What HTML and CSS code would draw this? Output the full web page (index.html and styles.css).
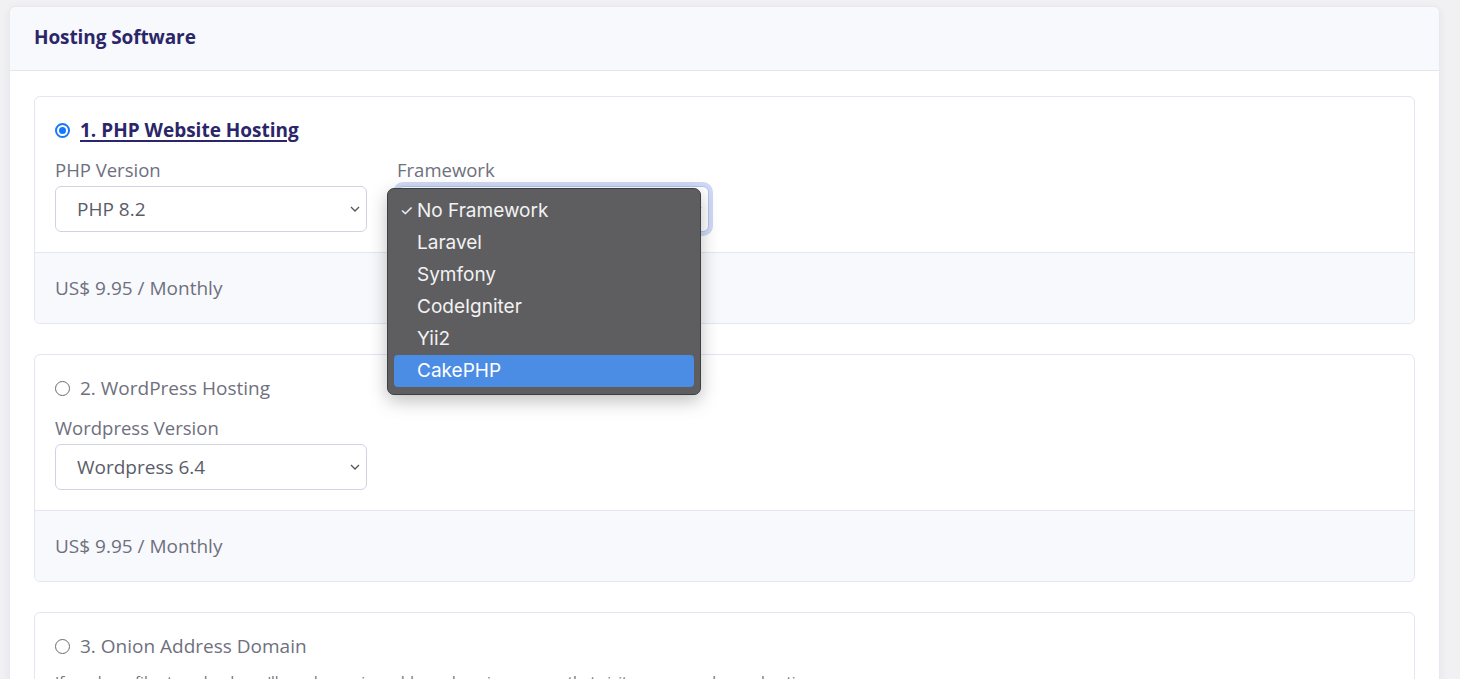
FILE: index.html
```html
<!DOCTYPE html>
<html>
<head>
<meta charset="utf-8">
<link rel="stylesheet" href="styles.css">
</head>
<body>
<div class="panel">
  <div class="panel-header">Hosting Software</div>
  <div class="panel-body">
    <div class="option">
      <div class="option-body">
        <div class="option-title selected"><span class="radio checked"></span><span class="title-text">1. PHP Website Hosting</span></div>
        <div class="fields">
          <div class="field">
            <div class="field-label">PHP Version</div>
            <div class="select"><span>PHP 8.2</span><svg class="chev" viewBox="0 0 10 6" width="10" height="6"><path d="M1 1l4 4 4-4" fill="none" stroke="#555" stroke-width="1.3"/></svg></div>
          </div>
          <div class="field">
            <div class="field-label">Framework</div>
            <div class="select focused"><span>No Framework</span><svg class="chev" viewBox="0 0 10 6" width="10" height="6"><path d="M1 1l4 4 4-4" fill="none" stroke="#555" stroke-width="1.3"/></svg></div>
            <div class="popup">
              <div class="popup-item"><span class="check">✓</span>No Framework</div>
              <div class="popup-item">Laravel</div>
              <div class="popup-item">Symfony</div>
              <div class="popup-item">CodeIgniter</div>
              <div class="popup-item">Yii2</div>
              <div class="popup-item active">CakePHP</div>
            </div>
          </div>
        </div>
      </div>
      <div class="option-footer">US$ 9.95 / Monthly</div>
    </div>

    <div class="option">
      <div class="option-body">
        <div class="option-title"><span class="radio"></span><span class="title-text">2. WordPress Hosting</span></div>
        <div class="fields">
          <div class="field">
            <div class="field-label">Wordpress Version</div>
            <div class="select"><span>Wordpress 6.4</span><svg class="chev" viewBox="0 0 10 6" width="10" height="6"><path d="M1 1l4 4 4-4" fill="none" stroke="#555" stroke-width="1.3"/></svg></div>
          </div>
        </div>
      </div>
      <div class="option-footer">US$ 9.95 / Monthly</div>
    </div>

    <div class="option">
      <div class="option-body">
        <div class="option-title"><span class="radio"></span><span class="title-text">3. Onion Address Domain</span></div>
        <p class="desc">If you have files to upload, you'll need an onion address domain name so that visitors can reach your hosting.</p>
      </div>
    </div>
  </div>
</div>
</body>
</html>
```

FILE: styles.css
```css
* { box-sizing: border-box; }
html, body { margin: 0; padding: 0; }
body {
  background: #f1f1f4;
  font-family: "Open Sans", "Noto Sans", sans-serif;
  color: #6e707e;
  overflow: hidden;
  height: 679px;
}
.panel {
  margin: 6px 20px 0 9px;
  background: #fff;
  border: 1px solid #e6e8f2;
  border-radius: 7px;
  box-shadow: 0 2px 10px rgba(40, 40, 80, 0.06);
}
.panel-header {
  height: 64px;
  background: #f8f9fc;
  border-bottom: 1px solid #e3e6f0;
  border-radius: 7px 7px 0 0;
  padding: 0 0 4px 24px;
  display: flex;
  align-items: center;
  font-size: 19px;
  font-weight: 700;
  color: #2b2669;
  letter-spacing: -0.1px;
}
.panel-body {
  padding: 25px 24px 0 24px;
}
.option {
  border: 1px solid #e3e6f0;
  border-radius: 6px;
  margin-bottom: 30px;
  background: #fff;
}
.option-body {
  padding: 19px 20px 20px 20px;
}
.option-title {
  height: 28px;
  display: flex;
  align-items: center;
  font-size: 19px;
  color: #6e707e;
}
.option-title.selected .title-text {
  color: #2b2669;
  font-weight: 700;
  text-decoration: underline;
  text-underline-offset: 3px;
  text-decoration-thickness: 1.5px;
}
.radio {
  width: 15px;
  height: 15px;
  border-radius: 50%;
  border: 1.5px solid #6b6b6b;
  margin-right: 10px;
  flex: none;
  position: relative;
}
.radio.checked {
  border: 2px solid #1677ff;
}
.radio.checked::after {
  content: "";
  position: absolute;
  left: 2px; top: 2px;
  width: 7px; height: 7px;
  border-radius: 50%;
  background: #1677ff;
}
.fields {
  display: flex;
  gap: 30px;
  margin-top: 14px;
}
.field {
  position: relative;
  width: 312px;
}
.field-label {
  height: 24px;
  line-height: 24px;
  font-size: 18.5px;
  color: #6e707e;
  margin-bottom: 4px;
}
.select {
  height: 46px;
  border: 1px solid #d1d3e2;
  border-radius: 6px;
  padding: 0 6px 0 21px;
  display: flex;
  align-items: center;
  justify-content: space-between;
  font-size: 19px;
  color: #5a5c69;
  background: #fff;
}
.select.focused {
  border-color: #b3c2f0;
  box-shadow: 0 0 0 4px rgba(120, 145, 225, 0.35);
}
.chev { flex: none; }
.popup {
  position: absolute;
  left: -10px;
  top: 30px;
  width: 314px;
  background: #5e5e61;
  border: 1px solid #3f3f42;
  border-radius: 7px;
  padding: 6px 6px 7px 6px;
  box-shadow: 0 6px 18px rgba(0, 0, 0, 0.25);
  font-family: Inter, Roboto, "Noto Sans", sans-serif;
  z-index: 5;
}
.popup-item {
  height: 32px;
  line-height: 32px;
  padding-left: 23px;
  font-size: 19px;
  color: #f2f2f2;
  position: relative;
  border-radius: 4px;
}
.popup-item .check {
  position: absolute;
  left: 6px;
  font-size: 15px;
}
.popup-item.active {
  background: #4b8ce5;
  color: #fff;
}
.option-footer {
  height: 71px;
  background: #f8f9fc;
  border-top: 1px solid #e3e6f0;
  border-radius: 0 0 6px 6px;
  padding-left: 20px;
  display: flex;
  align-items: center;
  font-size: 19px;
  color: #6e707e;
}
.desc {
  margin: 11px 0 0 0;
  font-size: 15px;
  line-height: 20px;
  color: #6e707e;
}
```
